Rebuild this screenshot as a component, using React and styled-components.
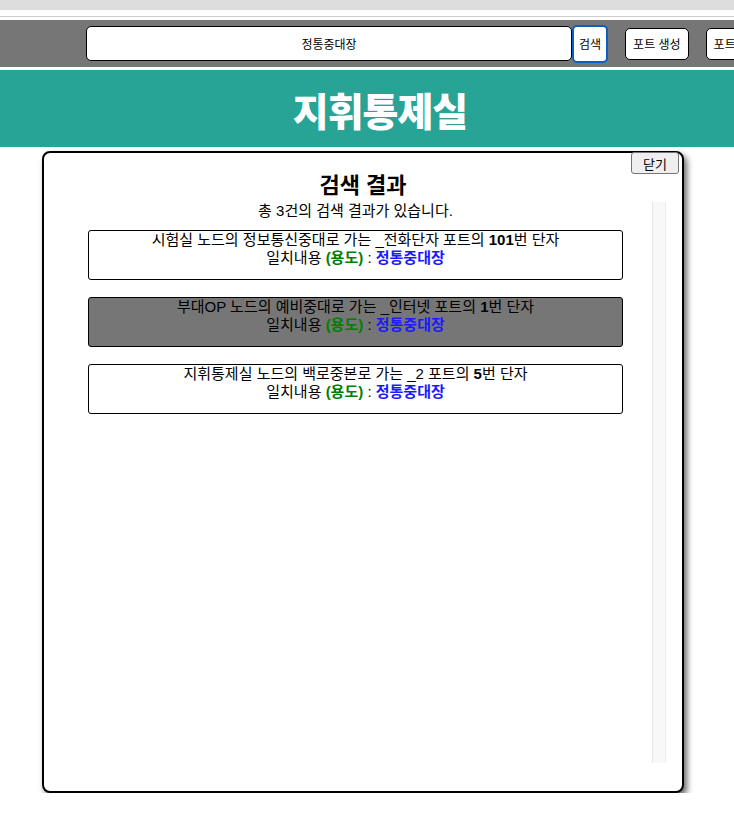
import styled, { createGlobalStyle } from "styled-components";

const GlobalStyle = createGlobalStyle`
  html, body {
    margin: 0;
    padding: 0;
    background: #fff;
    overflow-x: hidden;
    font-family: "Liberation Sans", "Noto Sans CJK KR", sans-serif;
    color: #000;
  }
`;

const TopStrip = styled.div`
  height: 10px;
  background: #dddddd;
`;

const Divider = styled.div`
  height: 7px;
  box-sizing: border-box;
  border-bottom: 1px solid #cccccc;
`;

const Toolbar = styled.div`
  display: flex;
  align-items: center;
  height: 47px;
  margin-top: 3px;
  padding-left: 86px;
  background: #767676;
  white-space: nowrap;
  overflow: hidden;
`;

const SearchInput = styled.input`
  flex-shrink: 0;
  width: 486px;
  height: 35px;
  box-sizing: border-box;
  border: 1px solid #000;
  border-radius: 5px;
  background: #fff;
  text-align: center;
  font-family: inherit;
  font-size: 12px;
  color: #000;
  outline: none;
`;

const ToolButton = styled.button`
  flex-shrink: 0;
  height: ${p => (p.focused ? "38px" : "32px")};
  margin-left: ${p => (p.focused ? "0" : "17px")};
  padding: 0 ${p => (p.focused ? "5px" : "7px")};
  box-sizing: border-box;
  border: ${p => (p.focused ? "2px solid #0a5fc4" : "1px solid #000")};
  border-radius: 5px;
  background: #fff;
  font-family: inherit;
  font-size: 12px;
  color: #000;
`;

const Header = styled.div`
  display: flex;
  justify-content: center;
  align-items: center;
  height: 77px;
  margin-top: 3px;
  padding-left: 26px;
  background: #28a497;
`;

const HeaderTitle = styled.h1`
  margin: 0;
  font-size: 39px;
  font-weight: 900;
  color: #fff;
  letter-spacing: -1px;
`;

const Modal = styled.div`
  display: flex;
  flex-direction: column;
  width: 642px;
  height: 642px;
  margin: 4px 0 0 42px;
  box-sizing: border-box;
  border: 2px solid #000;
  border-radius: 8px;
  background: #fff;
  box-shadow: 3px 4px 6px rgba(0, 0, 0, 0.6);
`;

const ModalTop = styled.div`
  display: flex;
  justify-content: flex-end;
  padding-right: 3px;
  margin-top: -1px;
`;

const CloseButton = styled.button`
  width: 48px;
  height: 22px;
  padding: 0;
  border: 1px solid #767676;
  border-radius: 3px;
  background: #efefef;
  font-family: inherit;
  font-size: 13px;
  color: #000;
`;

const ModalTitle = styled.h2`
  margin: 0;
  height: 28px;
  line-height: 24px;
  text-align: center;
  font-size: 22px;
  font-weight: bold;
`;

const ResultArea = styled.div`
  flex: 1;
  display: flex;
  margin: 0 16px 28px 15px;
  min-height: 0;
`;

const ResultList = styled.div`
  flex: 1;
  overflow: hidden;
`;

const ScrollTrack = styled.div`
  width: 12px;
  background: #f8f8f8;
  border-left: 1px solid #e6e6e6;
  border-right: 1px solid #ececec;
`;

const Summary = styled.p`
  margin: 0 0 10px;
  line-height: 18px;
  text-align: center;
  font-size: 15px;
`;

const ResultCard = styled.div`
  margin: 0 29px 17px;
  padding-bottom: 12px;
  border: 1px solid #000;
  border-radius: 3px;
  background: ${p => (p.active ? "#767676" : "#fff")};
  text-align: center;
  font-size: 15px;
  line-height: 18px;
`;

const Usage = styled.b`
  color: #008000;
`;

const Match = styled.b`
  color: #1a1aff;
`;

const results = [
  { node: "시험실", dest: "정보통신중대", port: "_전화단자", num: 101 },
  { node: "부대OP", dest: "예비중대", port: "_인터넷", num: 1, active: true },
  { node: "지휘통제실", dest: "백로중본", port: "_2", num: 5 },
];

const App = () => {
  return (
    <>
      <GlobalStyle />
      <TopStrip />
      <Divider />
      <Toolbar>
        <SearchInput defaultValue="정통중대장" />
        <ToolButton focused>검색</ToolButton>
        <ToolButton>포트 생성</ToolButton>
        <ToolButton>포트 삭제</ToolButton>
      </Toolbar>
      <Header>
        <HeaderTitle>지휘통제실</HeaderTitle>
      </Header>
      <Modal>
        <ModalTop>
          <CloseButton>닫기</CloseButton>
        </ModalTop>
        <ModalTitle>검색 결과</ModalTitle>
        <ResultArea>
          <ResultList>
            <Summary>총 {results.length}건의 검색 결과가 있습니다.</Summary>
            {results.map((r) => (
              <ResultCard key={r.node} active={r.active}>
                <div>
                  {r.node} 노드의 {r.dest}로 가는 {r.port} 포트의 <b>{r.num}</b>번 단자
                </div>
                <div>
                  일치내용 <Usage>(용도)</Usage> : <Match>정통중대장</Match>
                </div>
              </ResultCard>
            ))}
          </ResultList>
          <ScrollTrack />
        </ResultArea>
      </Modal>
    </>
  );
};

export default App;
